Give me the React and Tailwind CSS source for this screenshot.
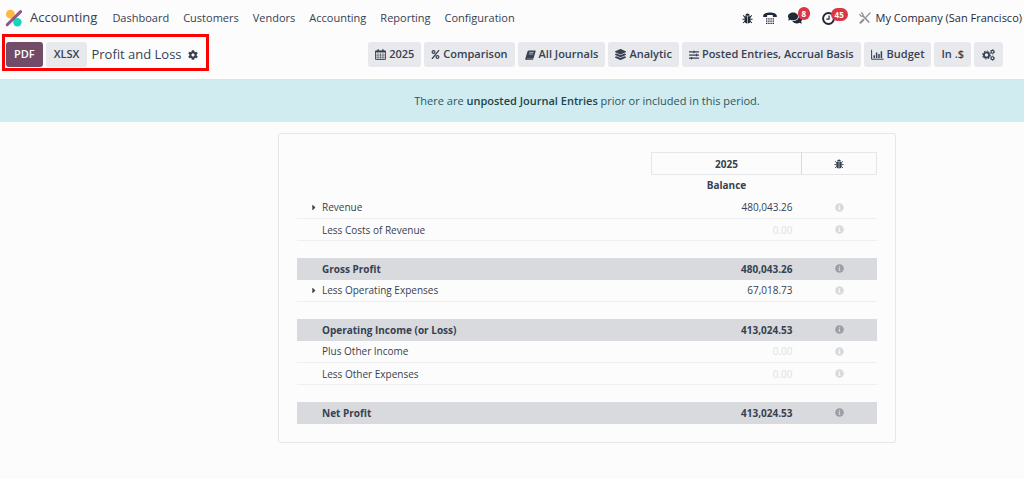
import React from "react";
import {
  FaCaretRight,
  FaCog,
  FaComments,
  FaInfoCircle,
  FaLayerGroup,
  FaPercent,
  FaSlidersH,
} from "react-icons/fa";

const menus = ["Dashboard", "Customers", "Vendors", "Accounting", "Reporting", "Configuration"];

const rows = [
  { name: "Revenue", value: "480,043.26", foldable: true },
  { name: "Less Costs of Revenue", value: "0.00" },
  { name: "Gross Profit", value: "480,043.26", total: true },
  { name: "Less Operating Expenses", value: "67,018.73", foldable: true },
  { name: "Operating Income (or Loss)", value: "413,024.53", total: true },
  { name: "Plus Other Income", value: "0.00" },
  { name: "Less Other Expenses", value: "0.00" },
  { name: "Net Profit", value: "413,024.53", total: true },
];

const Logo = () => (
  <svg viewBox="0 0 18 18" className="h-[18px] w-[18px] shrink-0">
    <circle cx="5.4" cy="5.2" r="4.4" fill="#fbb945" />
    <circle cx="12.4" cy="13.2" r="4.2" fill="#1ad3bb" />
    <path d="M2.2 15.8 L15.6 2.6" stroke="#985184" strokeWidth="3" strokeLinecap="round" />
  </svg>
);

const BugIcon = ({ className }) => (
  <svg viewBox="0 0 12 12" className={className} fill="currentColor">
    <path d="M3.6 2.9a2.4 2.4 0 0 1 4.8 0z" />
    <path d="M2.8 3.5h2.9v8c-1.7 0-2.9-1-2.9-3z" />
    <path d="M6.3 3.5h2.9v5c0 2-1.2 3-2.9 3z" />
    <path d="M1.2 2.7l2 1.7M10.8 2.7l-2 1.7M.5 6.7h2.5M9 6.7h2.5M1.2 10.9l2-2M10.8 10.9l-2-2" stroke="currentColor" strokeWidth="1.1" />
  </svg>
);

const PhoneIcon = () => (
  <svg viewBox="0 0 14 13" className="h-[13px] w-[14px]" fill="currentColor">
    <path d="M.2 3.6C.6 1.3 3.5.4 7 .4s6.4.9 6.8 3.2v1.3H9.9V3.3C8.5 2.8 5.5 2.8 4.1 3.3v1.6H.2z" />
    <path d="M3 6.9h8M3 9.1h8M3 11.3h8" stroke="currentColor" strokeWidth="1.3" strokeDasharray="1.4 .8" />
  </svg>
);

const ClockIcon = () => (
  <svg viewBox="0 0 12 12" className="h-[13px] w-[13px]" fill="none" stroke="currentColor">
    <circle cx="6" cy="6" r="5" strokeWidth="1.8" />
    <path d="M6.5 3.2v3.3H4" strokeWidth="1.1" />
  </svg>
);

const ToolsIcon = () => (
  <svg viewBox="0 0 12 12" className="h-3 w-3" fill="none" stroke="currentColor" strokeLinecap="round">
    <path d="M4 4l5.8 6" strokeWidth="1.7" />
    <path d="M.9 2.3c.1 1.5 1.5 2.2 2.9 1.7C4.4 2.6 3.7 1 2.3.9" strokeWidth="1.3" />
    <path d="M11 1L6.8 5.4" strokeWidth="1.3" />
    <path d="M4.4 7.8L1.5 10.7" strokeWidth="2" />
  </svg>
);

const CalendarIcon = () => (
  <svg viewBox="0 0 12 12" className="h-[11px] w-[11px]" fill="none" stroke="currentColor">
    <path d="M.6 2.2h10.8v9.2H.6z" strokeWidth="1" />
    <path d="M.6 2.2h10.8v1.2H.6z" fill="currentColor" strokeWidth=".6" />
    <path d="M3.4 .4v2.4M8.6 .4v2.4" strokeWidth="1.5" />
    <path d="M3.3 4v7.4M6 4v7.4M8.7 4v7.4M.6 6.6h10.8M.6 9h10.8" strokeWidth=".6" />
  </svg>
);

const BookIcon = () => (
  <svg viewBox="0 0 12 11" className="h-[10px] w-[11px]" fill="currentColor">
    <path d="M4.2.5h6.6c.7 0 1 .5.8 1.1L9.5 8.8c-.1.5-.6.8-1.1.8H2.2c-.4 0-.5.3-.2.5h6.9v.9H1.8C.6 11 0 10 .4 9L2.7 1.6C2.9.9 3.5.5 4.2.5z" />
    <path d="M4.7 2.7h4.6M4.2 4.5h4.6" stroke="#e7e9ed" strokeWidth=".7" />
  </svg>
);

const BarChartIcon = () => (
  <svg viewBox="0 0 13 11" className="h-[11px] w-[13px]" fill="none" stroke="currentColor">
    <path d="M.6 .8v9.4h12" strokeWidth="1" />
    <path d="M3.2 9V6.2M5.6 9V3.4M8 9V5M10.4 9V2.2" strokeWidth="1.5" />
  </svg>
);

const CogsIcon = () => (
  <svg viewBox="0 0 13 12" className="h-3 w-[13px]" fill="none" stroke="currentColor">
    <circle cx="4.5" cy="6" r="2.6" strokeWidth="1.8" />
    <circle cx="4.5" cy="6" r="4" strokeWidth="1" strokeDasharray="1.57 1.57" />
    <circle cx="10.5" cy="2.8" r="1.4" strokeWidth="1.1" />
    <circle cx="10.5" cy="2.8" r="2.2" strokeWidth=".7" strokeDasharray="1.15 1.15" />
    <circle cx="10.5" cy="9.2" r="1.4" strokeWidth="1.1" />
    <circle cx="10.5" cy="9.2" r="2.2" strokeWidth=".7" strokeDasharray="1.15 1.15" />
  </svg>
);

const filters = [
  { icon: <CalendarIcon />, label: "2025" },
  { icon: <FaPercent className="h-[9px] w-[9px]" />, label: "Comparison" },
  { icon: <BookIcon />, label: "All Journals" },
  { icon: <FaLayerGroup className="h-[11px] w-[11px]" />, label: "Analytic" },
  { icon: <FaSlidersH className="h-[10px] w-[10px]" />, label: "Posted Entries, Accrual Basis" },
  { icon: <BarChartIcon />, label: "Budget" },
  { label: "In .$" },
];

const Navbar = () => (
  <header className="flex h-[34px] items-center pt-[2px] pr-[2px] pl-[5px] whitespace-nowrap">
    <a href="#home" className="flex items-center gap-[7px] text-[13px]">
      <Logo />
      Accounting
    </a>
    <nav className="ml-[15px] flex gap-[14px] text-[11px] text-[#374151]">
      {menus.map((menu) => (
        <a key={menu} href={`#${menu.toLowerCase()}`}>
          {menu}
        </a>
      ))}
    </nav>
    <div className="ml-auto flex items-center text-[#1f2937]">
      <button aria-label="Debug">
        <BugIcon className="h-[11px] w-[11px]" />
      </button>
      <button aria-label="Phone" className="ml-[10px]">
        <PhoneIcon />
      </button>
      <button aria-label="Messages" className="relative ml-[11px]">
        <FaComments className="h-[14px] w-[14px]" />
        <span className="absolute -top-[4px] left-[10px] rounded-full bg-[#dc3545] px-1 text-[8px] leading-[13px] font-bold text-white">8</span>
      </button>
      <button aria-label="Activities" className="relative ml-[20px]">
        <ClockIcon />
        <span className="absolute -top-[4px] left-[9px] rounded-full bg-[#dc3545] px-1 text-[8px] leading-[13px] font-bold text-white">45</span>
      </button>
      <button aria-label="Studio" className="ml-[24px] text-[#8b9098]">
        <ToolsIcon />
      </button>
      <button className="ml-[5px] text-[11px]">My Company (San Francisco)</button>
    </div>
  </header>
);

const ControlPanel = () => (
  <div className="flex items-start justify-between border-b border-[#dee2e6] pr-[21px] pb-2 pl-[2px] whitespace-nowrap">
    <div className="flex items-center border-[3px] border-[#ff0000] px-[1px] pt-[5px] pb-[1px]">
      <button className="h-[25px] rounded-[3px] bg-[#714b67] px-2 text-[11px] font-semibold text-white">PDF</button>
      <button className="ml-[3px] h-[25px] rounded-[3px] bg-[#e7e9ed] px-2 text-[11px] font-semibold">XLSX</button>
      <h1 className="ml-1 text-[13px]">Profit and Loss</h1>
      <button aria-label="Actions" className="mr-[7px] ml-1.5">
        <FaCog className="h-[10px] w-[10px]" />
      </button>
    </div>
    <div className="mt-2 flex gap-[3px] text-[11px] font-semibold">
      {filters.map((filter) => (
        <button key={filter.label} className="flex h-[25px] items-center gap-[3px] rounded-[3px] bg-[#e7e9ed] px-[7px]">
          {filter.icon}
          {filter.label}
        </button>
      ))}
      <button aria-label="Options" className="h-[25px] rounded-[3px] bg-[#e7e9ed] px-2">
        <CogsIcon />
      </button>
    </div>
  </div>
);

const ReportRow = ({ row }) => {
  const empty = row.value === "0.00";
  return (
    <>
      {row.total && (
        <tr aria-hidden="true">
          <td colSpan={3} className="h-[17px] p-0"></td>
        </tr>
      )}
      <tr className={row.total ? "h-[22px] bg-[#d8dadd] font-bold" : "h-[22px] border-b border-[#eeeff1]"}>
        <td className="p-0">
          <div className="flex items-center">
            <span className="flex w-[25px] justify-end pr-[6px]">
              {row.foldable && <FaCaretRight className="h-[9px] w-[4px]" />}
            </span>
            {row.name}
          </div>
        </td>
        <td className={empty ? "p-0 pr-[9px] text-right text-[#dfe1e4]" : "p-0 pr-[9px] text-right"}>{row.value}</td>
        <td className="p-0">
          <button aria-label={`About ${row.name}`} className="mx-auto block">
            <FaInfoCircle className={row.total ? "h-[9px] w-[9px] text-[#9a9da5]" : "h-[9px] w-[9px] text-[#d8dadd]"} />
          </button>
        </td>
      </tr>
    </>
  );
};

const Report = () => (
  <main className="grid grid-cols-[278fr_618fr_128fr] pt-[11px] pb-9">
    <section className="col-start-2 rounded-[3px] border border-[#e6e7ea] px-[18px] py-[18px]">
      <table className="w-full table-fixed border-collapse text-[10px] leading-[14px]">
        <colgroup>
          <col />
          <col className="w-[150px]" />
          <col className="w-[75px]" />
        </colgroup>
        <thead>
          <tr className="h-[22px]">
            <td></td>
            <th className="border border-[#e6e7ea] border-r-[#d8dadd] p-0 font-bold">2025</th>
            <th className="border border-[#e6e7ea] p-0">
              <BugIcon className="mx-auto h-[10px] w-[10px]" />
            </th>
          </tr>
          <tr className="h-[22px]">
            <td></td>
            <th className="p-0 pb-[2px] font-bold">Balance</th>
            <td></td>
          </tr>
        </thead>
        <tbody>
          {rows.map((row) => (
            <ReportRow key={row.name} row={row} />
          ))}
        </tbody>
      </table>
    </section>
  </main>
);

const App = () => {
  return (
    <div className="min-h-screen bg-[#fcfcfc] font-['Open_Sans','Noto_Sans',sans-serif] text-[#374151]">
      <Navbar />
      <ControlPanel />
      <div className="bg-[#d1ecf0] py-3 pl-[150px] text-center text-[11px] leading-[18px] text-[#2a565e]">
        There are <a href="#entries" className="font-semibold text-[#1b464e]">unposted Journal Entries</a> prior or included in this period.
      </div>
      <Report />
    </div>
  );
};

export default App;
